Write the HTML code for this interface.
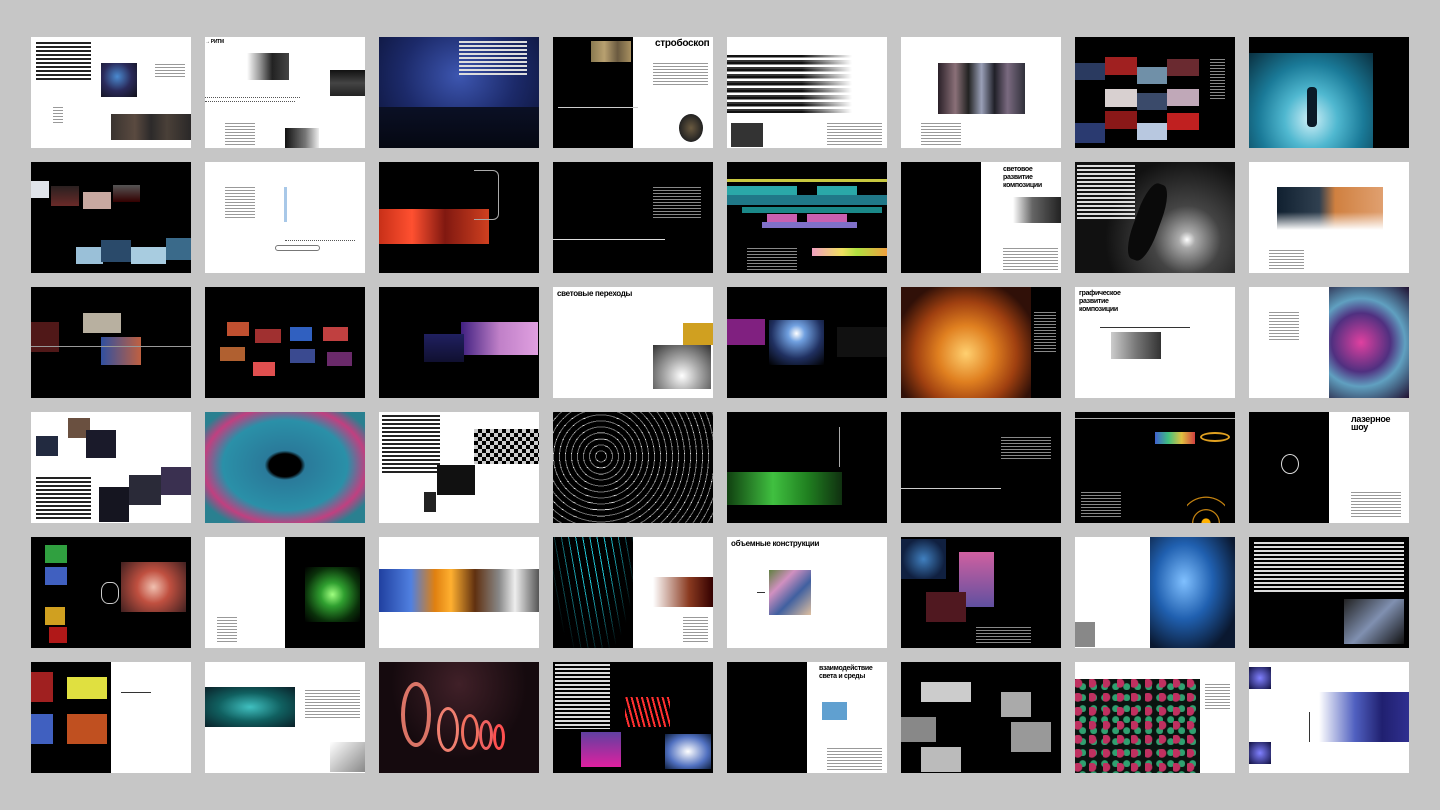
<!DOCTYPE html>
<html><head><meta charset="utf-8"><style>
*{margin:0;padding:0;box-sizing:border-box}
body{width:1440px;height:810px;background:#c6c6c6;position:relative;overflow:hidden;font-family:"Liberation Sans","DejaVu Sans",sans-serif}
.c{position:absolute;width:160px;height:111px;overflow:hidden;background:#fff}
.k{background:#000}
.c b{position:absolute;display:block}
.t{background:repeating-linear-gradient(#999 0 1px,transparent 1px 3px)}
.tw{background:repeating-linear-gradient(#888 0 1px,transparent 1px 3px)}
.tb{background:repeating-linear-gradient(#222 0 2px,transparent 2px 4px)}
.tbw{background:repeating-linear-gradient(#ddd 0 2px,transparent 2px 4px)}
.h{font-size:8px;line-height:8px;letter-spacing:-.3px}
</style></head><body>

<!-- ROW 0 -->
<div class="c" style="left:31px;top:37px">
<b class="tb" style="left:5px;top:5px;width:55px;height:40px"></b>
<b style="left:70px;top:26px;width:36px;height:34px;background:radial-gradient(circle at 45% 40%,#4a8ad0,#2a2a5a 50%,#101018)"></b>
<b class="t" style="left:124px;top:27px;width:30px;height:15px"></b>
<b style="left:80px;top:77px;width:80px;height:26px;background:linear-gradient(90deg,#3a3430,#5a4a40 30%,#2c2a2a 50%,#4a4038 70%,#2a2828)"></b>
<b class="t" style="left:22px;top:70px;width:10px;height:16px"></b>
</div>
<div class="c" style="left:205px;top:37px">
<b style="left:42px;top:16px;width:42px;height:27px;background:linear-gradient(90deg,#fff,#999 30%,#222 60%,#444)"></b>
<b style="left:125px;top:33px;width:35px;height:26px;background:linear-gradient(#111,#444 50%,#222)"></b>
<b style="left:80px;top:91px;width:34px;height:20px;background:linear-gradient(90deg,#111,#777 60%,#eee)"></b>
<b style="left:0;top:60px;width:95px;height:1px;border-top:1px dotted #555"></b>
<b style="left:0;top:64px;width:90px;height:1px;border-top:1px dotted #555"></b>
<b class="t" style="left:20px;top:86px;width:30px;height:22px"></b>
<b class="h" style="left:0;top:1px;width:40px;height:8px;font-size:5px">→ РИТМ</b>
</div>
<div class="c" style="left:379px;top:37px;background:radial-gradient(ellipse at 50% 35%,#3d56b0,#1c2a6a 50%,#0a1030)">
<b class="tbw" style="left:80px;top:4px;width:68px;height:36px"></b>
<b style="left:0;top:70px;width:160px;height:41px;background:linear-gradient(#0b1025,#050812)"></b>
</div>
<div class="c" style="left:553px;top:37px">
<b class="k" style="left:0;top:0;width:80px;height:111px"></b>
<b style="left:38px;top:4px;width:40px;height:21px;background:linear-gradient(90deg,#8a7a50,#b8a070,#6a5a40,#a89060)"></b>
<b class="h" style="left:102px;top:3px;font-size:10px;color:#000">стробоскоп</b>
<b class="t" style="left:100px;top:26px;width:55px;height:22px"></b>
<b style="left:5px;top:70px;width:80px;height:1px;background:#ccc"></b>
<b style="left:126px;top:77px;width:24px;height:28px;border-radius:50%;background:radial-gradient(#6a5a40,#222 70%)"></b>
</div>
<div class="c" style="left:727px;top:37px">
<b style="left:0;top:18px;width:125px;height:58px;background:repeating-linear-gradient(#111 0 2px,#888 2px 3px,#fff 3px 5px,#333 5px 7px),#fff;-webkit-mask:linear-gradient(90deg,#000 60%,transparent)"></b>
<b style="left:4px;top:86px;width:32px;height:24px;background:#333"></b>
<b class="t" style="left:100px;top:86px;width:55px;height:22px"></b>
</div>
<div class="c" style="left:901px;top:37px">
<b style="left:37px;top:26px;width:87px;height:51px;background:linear-gradient(90deg,#2a2028,#8a7078 20%,#222 35%,#9aa0b8 50%,#202028 65%,#7a6a80 80%,#30303a)"></b>
<b class="t" style="left:20px;top:86px;width:40px;height:22px"></b>
</div>
<div class="c k" style="left:1075px;top:37px">
<b style="left:0;top:26px;width:30px;height:17px;background:#2a3a60"></b>
<b style="left:30px;top:20px;width:32px;height:18px;background:#a02020"></b>
<b style="left:62px;top:30px;width:30px;height:17px;background:#7090a8"></b>
<b style="left:92px;top:22px;width:32px;height:17px;background:#6a2a30"></b>
<b style="left:30px;top:52px;width:32px;height:18px;background:#d8d0d0"></b>
<b style="left:62px;top:56px;width:30px;height:17px;background:#3a4a6a"></b>
<b style="left:92px;top:52px;width:32px;height:17px;background:#c0a8b8"></b>
<b style="left:0;top:86px;width:30px;height:20px;background:#2a3a70"></b>
<b style="left:30px;top:74px;width:32px;height:18px;background:#8a1818"></b>
<b style="left:62px;top:86px;width:30px;height:17px;background:#b8c8e0"></b>
<b style="left:92px;top:76px;width:32px;height:17px;background:#c02020"></b>
<b class="tw" style="left:135px;top:22px;width:15px;height:40px"></b>
</div>
<div class="c k" style="left:1249px;top:37px">
<b style="left:0;top:16px;width:124px;height:95px;background:radial-gradient(ellipse at 50% 70%,#d0f0f8,#50b8d0 30%,#1a7a98 60%,#0a3040)"></b>
<b style="left:58px;top:50px;width:10px;height:40px;background:#0a1a28;border-radius:4px"></b>
</div>

<!-- ROW 1 -->
<div class="c k" style="left:31px;top:162px">
<b style="left:0;top:19px;width:18px;height:17px;background:#e0e4ea"></b>
<b style="left:20px;top:24px;width:28px;height:20px;background:linear-gradient(#2a2020,#6a2a28)"></b>
<b style="left:52px;top:30px;width:28px;height:17px;background:#c8a8a0"></b>
<b style="left:82px;top:23px;width:27px;height:17px;background:linear-gradient(#555,#300)"></b>
<b style="left:45px;top:85px;width:27px;height:17px;background:#9ac0d8"></b>
<b style="left:70px;top:78px;width:30px;height:22px;background:#2a4a6a"></b>
<b style="left:100px;top:85px;width:35px;height:17px;background:#a8cce0"></b>
<b style="left:135px;top:76px;width:25px;height:22px;background:#3a6a8a"></b>
</div>
<div class="c" style="left:205px;top:162px">
<b class="t" style="left:20px;top:25px;width:30px;height:31px"></b>
<b style="left:79px;top:25px;width:3px;height:35px;background:#a8c8e8"></b>
<b style="left:80px;top:78px;width:70px;height:1px;border-top:1px dotted #555"></b>
<b style="left:70px;top:83px;width:45px;height:6px;border:1px solid #777;border-radius:4px"></b>
</div>
<div class="c k" style="left:379px;top:162px">
<b style="left:0;top:47px;width:110px;height:35px;background:linear-gradient(90deg,#c83018,#ff5030 30%,#801810 60%,#d04020)"></b>
<b style="left:95px;top:8px;width:25px;height:50px;border:1px solid #aaa;border-left:none;border-radius:0 6px 6px 0"></b>
</div>
<div class="c k" style="left:553px;top:162px">
<b class="tw" style="left:100px;top:25px;width:48px;height:32px"></b>
<b style="left:0;top:77px;width:112px;height:1px;background:#ddd"></b>
</div>
<div class="c k" style="left:727px;top:162px">
<b style="left:0;top:17px;width:160px;height:3px;background:#c8c840"></b>
<b style="left:0;top:24px;width:70px;height:9px;background:#2aa8a8"></b>
<b style="left:90px;top:24px;width:40px;height:9px;background:#2aa8a8"></b>
<b style="left:0;top:33px;width:160px;height:10px;background:#207888"></b>
<b style="left:15px;top:45px;width:140px;height:6px;background:#1a8888"></b>
<b style="left:40px;top:52px;width:30px;height:8px;background:#c860b0"></b>
<b style="left:80px;top:52px;width:40px;height:8px;background:#c860b0"></b>
<b style="left:35px;top:60px;width:95px;height:6px;background:#8070c8"></b>
<b style="left:85px;top:86px;width:75px;height:8px;background:linear-gradient(90deg,#f0a0c0,#f0e060 40%,#b0e040 60%,#f0a040)"></b>
<b class="tw" style="left:20px;top:86px;width:50px;height:22px"></b>
</div>
<div class="c" style="left:901px;top:162px">
<b class="k" style="left:0;top:0;width:80px;height:111px"></b>
<b class="h" style="left:102px;top:4px;font-size:7px;color:#000;width:58px">световое развитие композиции</b>
<b style="left:112px;top:35px;width:48px;height:26px;background:linear-gradient(90deg,#fff,#666 40%,#222)"></b>
<b class="t" style="left:102px;top:86px;width:55px;height:22px"></b>
</div>
<div class="c k" style="left:1075px;top:162px;background:radial-gradient(circle at 70% 70%,#fff 0,#aaa 6%,#444 25%,#111 60%)">
<b class="tbw" style="left:2px;top:3px;width:58px;height:56px"></b>
<b style="left:60px;top:20px;width:25px;height:80px;background:#0a0a0a;border-radius:40%;transform:rotate(20deg)"></b>
</div>
<div class="c" style="left:1249px;top:162px">
<b style="left:28px;top:25px;width:106px;height:43px;background:linear-gradient(90deg,#102030,#304050 40%,#d08040 55%,#e0a070)"></b>
<b style="left:28px;top:50px;width:106px;height:18px;background:linear-gradient(transparent,#fff)"></b>
<b class="t" style="left:20px;top:88px;width:35px;height:20px"></b>
</div>

<!-- ROW 2 -->
<div class="c k" style="left:31px;top:287px">
<b style="left:52px;top:26px;width:38px;height:20px;background:#b8b0a0"></b>
<b style="left:0;top:35px;width:28px;height:30px;background:#501818"></b>
<b style="left:70px;top:50px;width:40px;height:28px;background:linear-gradient(90deg,#3050a0,#c06040)"></b>
<b style="left:0;top:59px;width:160px;height:1px;background:#999"></b>
</div>
<div class="c k" style="left:205px;top:287px">
<b style="left:22px;top:35px;width:22px;height:14px;background:#c05030"></b>
<b style="left:50px;top:42px;width:26px;height:14px;background:#a03030"></b>
<b style="left:85px;top:40px;width:22px;height:14px;background:#3060c0"></b>
<b style="left:118px;top:40px;width:25px;height:14px;background:#c04040"></b>
<b style="left:15px;top:60px;width:25px;height:14px;background:#b06030"></b>
<b style="left:48px;top:75px;width:22px;height:14px;background:#e05050"></b>
<b style="left:85px;top:62px;width:25px;height:14px;background:#3a4a90"></b>
<b style="left:122px;top:65px;width:25px;height:14px;background:#6a2a6a"></b>
</div>
<div class="c k" style="left:379px;top:287px">
<b style="left:82px;top:35px;width:77px;height:33px;background:linear-gradient(90deg,#402080,#c080c8 50%,#e0a0e0)"></b>
<b style="left:45px;top:47px;width:40px;height:28px;background:linear-gradient(#202060,#101030)"></b>
</div>
<div class="c" style="left:553px;top:287px">
<b class="h" style="left:4px;top:3px;font-size:8px;color:#000">световые переходы</b>
<b style="left:130px;top:36px;width:30px;height:22px;background:#d0a020"></b>
<b style="left:100px;top:58px;width:58px;height:44px;background:radial-gradient(circle at 50% 70%,#fff,#aaa 40%,#333)"></b>
</div>
<div class="c k" style="left:727px;top:287px">
<b style="left:0;top:32px;width:38px;height:26px;background:#802080"></b>
<b style="left:42px;top:33px;width:55px;height:45px;background:radial-gradient(circle at 50% 30%,#fff,#70a0e0 20%,#203060 60%,#000)"></b>
<b style="left:110px;top:40px;width:50px;height:30px;background:#111"></b>
</div>
<div class="c k" style="left:901px;top:287px">
<b style="left:0;top:0;width:130px;height:111px;background:radial-gradient(ellipse at 50% 60%,#ffd070,#e08020 30%,#a04010 55%,#301008 80%)"></b>
<b class="tw" style="left:133px;top:25px;width:22px;height:40px"></b>
</div>
<div class="c" style="left:1075px;top:287px">
<b class="h" style="left:4px;top:3px;width:70px;font-size:7px;color:#000">графическое развитие композиции</b>
<b style="left:36px;top:45px;width:50px;height:27px;background:linear-gradient(90deg,#ccc,#777 50%,#333)"></b>
<b style="left:25px;top:40px;width:90px;height:1px;background:#333"></b>
</div>
<div class="c" style="left:1249px;top:287px">
<b style="left:80px;top:0;width:80px;height:111px;background:radial-gradient(circle at 40% 50%,#e040a0,#503080 40%,#60a0c0 60%,#201030)"></b>
<b class="t" style="left:20px;top:25px;width:30px;height:30px"></b>
</div>

<!-- ROW 3 -->
<div class="c" style="left:31px;top:412px">
<b style="left:5px;top:24px;width:22px;height:20px;background:#222a40"></b>
<b style="left:37px;top:6px;width:22px;height:20px;background:#6a5040"></b>
<b style="left:55px;top:18px;width:30px;height:28px;background:#1a1a2a"></b>
<b class="tb" style="left:5px;top:65px;width:55px;height:42px"></b>
<b style="left:68px;top:75px;width:30px;height:35px;background:#151520"></b>
<b style="left:98px;top:63px;width:32px;height:30px;background:#2a2a38"></b>
<b style="left:130px;top:55px;width:30px;height:28px;background:#3a3050"></b>
</div>
<div class="c" style="left:205px;top:412px;background:radial-gradient(ellipse at 50% 48%,#000 0,#000 14%,#2a7a9a 18%,#2a90a8 55%,#c04080 72%,#2a8090 85%)"></div>
<div class="c" style="left:379px;top:412px">
<b class="tb" style="left:3px;top:3px;width:58px;height:60px"></b>
<b style="left:95px;top:17px;width:65px;height:35px;background:repeating-conic-gradient(#000 0 25%,#ccc 0 50%) 0 0/8px 8px"></b>
<b style="left:58px;top:53px;width:38px;height:30px;background:#111"></b>
<b style="left:45px;top:80px;width:12px;height:20px;background:#222"></b>
</div>
<div class="c k" style="left:553px;top:412px;background:repeating-radial-gradient(circle at 30% 40%,#000 0 5px,#ddd 5px 6px),repeating-linear-gradient(90deg,#000 0 7px,#bbb 7px 8px)">
<b style="left:0;top:0;width:160px;height:111px;background:repeating-linear-gradient(#000 0 6px,transparent 6px 7px);opacity:.5"></b>
</div>
<div class="c k" style="left:727px;top:412px">
<b style="left:0;top:60px;width:115px;height:33px;background:linear-gradient(90deg,#104010,#40c040 40%,#208020 70%,#103010)"></b>
<b style="left:112px;top:15px;width:1px;height:40px;background:#aaa"></b>
</div>
<div class="c k" style="left:901px;top:412px">
<b class="tw" style="left:100px;top:25px;width:50px;height:24px"></b>
<b style="left:0;top:76px;width:100px;height:1px;background:#ccc"></b>
</div>
<div class="c k" style="left:1075px;top:412px">
<b style="left:0;top:6px;width:160px;height:1px;background:#aaa"></b>
<b style="left:80px;top:20px;width:40px;height:12px;background:linear-gradient(90deg,#4060d0,#40c080,#e0c040,#d04040)"></b>
<b style="left:125px;top:20px;width:30px;height:10px;border:2px solid #e0a020;border-radius:50%"></b>
<b style="left:112px;top:74px;width:38px;height:37px;border-radius:50% 50% 0 0;background:radial-gradient(circle at 50% 100%,#ffb000 0 10%,transparent 12% 30%,#c08010 31% 33%,transparent 34% 60%,#c08010 61% 63%,transparent 64%)"></b>
<b class="tw" style="left:6px;top:80px;width:40px;height:26px"></b>
</div>
<div class="c" style="left:1249px;top:412px">
<b class="k" style="left:0;top:0;width:80px;height:111px"></b>
<b class="h" style="left:102px;top:3px;font-size:9px;color:#000">лазерное шоу</b>
<b style="left:32px;top:42px;width:18px;height:20px;border:1px solid #ddd;border-radius:50%"></b>
<b class="t" style="left:102px;top:80px;width:50px;height:25px"></b>
</div>

<!-- ROW 4 -->
<div class="c k" style="left:31px;top:537px">
<b style="left:14px;top:8px;width:22px;height:18px;background:#30a040"></b>
<b style="left:14px;top:30px;width:22px;height:18px;background:#4060c0"></b>
<b style="left:14px;top:70px;width:20px;height:18px;background:#d0a020"></b>
<b style="left:18px;top:90px;width:18px;height:16px;background:#b01818"></b>
<b style="left:90px;top:25px;width:65px;height:50px;background:radial-gradient(circle,#f0c0b0,#c05040 40%,#402020)"></b>
<b style="left:70px;top:45px;width:18px;height:22px;border:1px solid #ccc;border-radius:40%"></b>
</div>
<div class="c" style="left:205px;top:537px">
<b class="k" style="left:80px;top:0;width:80px;height:111px"></b>
<b style="left:100px;top:30px;width:55px;height:55px;background:radial-gradient(circle,#a0ff80,#30a030 30%,#0a300a 70%,#000)"></b>
<b class="t" style="left:12px;top:80px;width:20px;height:26px"></b>
</div>
<div class="c" style="left:379px;top:537px">
<b style="left:0;top:32px;width:160px;height:43px;background:linear-gradient(90deg,#2040a0,#5080e0 20%,#e08010 35%,#ffb030 45%,#603010 60%,#888 75%,#eee 85%,#555)"></b>
</div>
<div class="c" style="left:553px;top:537px">
<b class="k" style="left:0;top:0;width:80px;height:111px;background:repeating-linear-gradient(80deg,#000 0 6px,#20c0d0 6px 7px)"></b>
<b style="left:0;top:0;width:80px;height:111px;background:radial-gradient(ellipse at 50% 0,transparent 30%,#000 80%)"></b>
<b style="left:100px;top:40px;width:60px;height:30px;background:linear-gradient(90deg,#fff,#8a3a20 60%,#300)"></b>
<b class="t" style="left:130px;top:80px;width:25px;height:26px"></b>
</div>
<div class="c" style="left:727px;top:537px">
<b class="h" style="left:4px;top:3px;font-size:8px;color:#000">объемные конструкции</b>
<b style="left:42px;top:33px;width:42px;height:45px;background:linear-gradient(135deg,#608040,#d090c0 30%,#4060a0 60%,#e0c0a0)"></b>
<b style="left:30px;top:55px;width:8px;height:1px;background:#333"></b>
</div>
<div class="c k" style="left:901px;top:537px">
<b style="left:0;top:2px;width:45px;height:40px;background:radial-gradient(circle,#4080c0,#102040 70%)"></b>
<b style="left:58px;top:15px;width:35px;height:55px;background:linear-gradient(#d060a0,#6050a0)"></b>
<b style="left:25px;top:55px;width:40px;height:30px;background:#501820"></b>
<b class="tw" style="left:75px;top:90px;width:55px;height:18px"></b>
</div>
<div class="c" style="left:1075px;top:537px">
<b style="left:75px;top:0;width:85px;height:111px;background:radial-gradient(ellipse at 40% 40%,#80c0ff,#2060b0 40%,#0a1830 80%)"></b>
<b style="left:0;top:85px;width:20px;height:25px;background:#888"></b>
</div>
<div class="c k" style="left:1249px;top:537px">
<b class="tbw" style="left:5px;top:5px;width:150px;height:52px"></b>
<b style="left:95px;top:62px;width:60px;height:45px;background:linear-gradient(135deg,#222,#8090b0 50%,#111)"></b>
</div>

<!-- ROW 5 -->
<div class="c" style="left:31px;top:662px">
<b class="k" style="left:0;top:0;width:80px;height:111px"></b>
<b style="left:0;top:10px;width:22px;height:30px;background:#a02020"></b>
<b style="left:36px;top:15px;width:40px;height:22px;background:#e0e040"></b>
<b style="left:0;top:52px;width:22px;height:30px;background:#4060c0"></b>
<b style="left:36px;top:52px;width:40px;height:30px;background:#c05020"></b>
<b style="left:90px;top:30px;width:30px;height:30px;border-top:1px solid #333"></b>
</div>
<div class="c" style="left:205px;top:662px">
<b style="left:0;top:25px;width:90px;height:40px;background:radial-gradient(ellipse,#40c0c0,#106060 50%,#0a2028)"></b>
<b class="t" style="left:100px;top:28px;width:55px;height:28px"></b>
<b style="left:125px;top:80px;width:35px;height:30px;background:linear-gradient(135deg,#fff,#888)"></b>
</div>
<div class="c" style="left:379px;top:662px;background:radial-gradient(ellipse at 50% 20%,#402028,#150a0e 60%)">
<b style="left:22px;top:20px;width:30px;height:65px;border:4px solid #f08070;border-radius:50%;opacity:.9"></b>
<b style="left:58px;top:45px;width:22px;height:45px;border:3px solid #f08070;border-radius:50%"></b>
<b style="left:82px;top:52px;width:18px;height:36px;border:3px solid #f07060;border-radius:50%"></b>
<b style="left:100px;top:58px;width:14px;height:30px;border:3px solid #f06060;border-radius:50%"></b>
<b style="left:114px;top:62px;width:12px;height:26px;border:3px solid #ff5050;border-radius:50%"></b>
</div>
<div class="c k" style="left:553px;top:662px">
<b class="tbw" style="left:2px;top:2px;width:55px;height:65px"></b>
<b style="left:72px;top:35px;width:45px;height:30px;background:repeating-linear-gradient(75deg,#000 0 3px,#ff3030 3px 5px)"></b>
<b style="left:28px;top:70px;width:40px;height:35px;background:linear-gradient(#6040a0,#e020a0)"></b>
<b style="left:112px;top:72px;width:46px;height:35px;background:radial-gradient(#fff,#5070c0 60%,#102040)"></b>
</div>
<div class="c" style="left:727px;top:662px">
<b class="k" style="left:0;top:0;width:80px;height:111px"></b>
<b class="h" style="left:92px;top:3px;width:68px;font-size:7px;color:#000">взаимодействие света и среды</b>
<b style="left:95px;top:40px;width:25px;height:18px;background:#60a0d0"></b>
<b class="t" style="left:100px;top:86px;width:55px;height:22px"></b>
</div>
<div class="c k" style="left:901px;top:662px">
<b style="left:20px;top:20px;width:50px;height:20px;background:#ccc"></b>
<b style="left:100px;top:30px;width:30px;height:25px;background:#aaa"></b>
<b style="left:0;top:55px;width:35px;height:25px;background:#888"></b>
<b style="left:20px;top:85px;width:40px;height:25px;background:#bbb"></b>
<b style="left:110px;top:60px;width:40px;height:30px;background:#999"></b>
</div>
<div class="c" style="left:1075px;top:662px">
<b style="left:0;top:17px;width:125px;height:94px;background:radial-gradient(circle at 20% 30%,#c03060 0 4px,transparent 5px) 0 0/14px 14px,radial-gradient(circle at 70% 70%,#30a070 0 3px,transparent 4px) 0 0/11px 11px,#0a1410"></b>
<b class="t" style="left:130px;top:22px;width:25px;height:25px"></b>
</div>
<div class="c" style="left:1249px;top:662px">
<b style="left:0;top:5px;width:22px;height:22px;background:radial-gradient(#8080ff,#101040)"></b>
<b style="left:0;top:80px;width:22px;height:22px;background:radial-gradient(#8080ff,#101040)"></b>
<b style="left:70px;top:30px;width:90px;height:50px;background:linear-gradient(90deg,#fff,#5060c0 40%,#202070 70%,#303090)"></b>
<b style="left:60px;top:50px;width:1px;height:30px;background:#333"></b>
</div>
</body></html>
